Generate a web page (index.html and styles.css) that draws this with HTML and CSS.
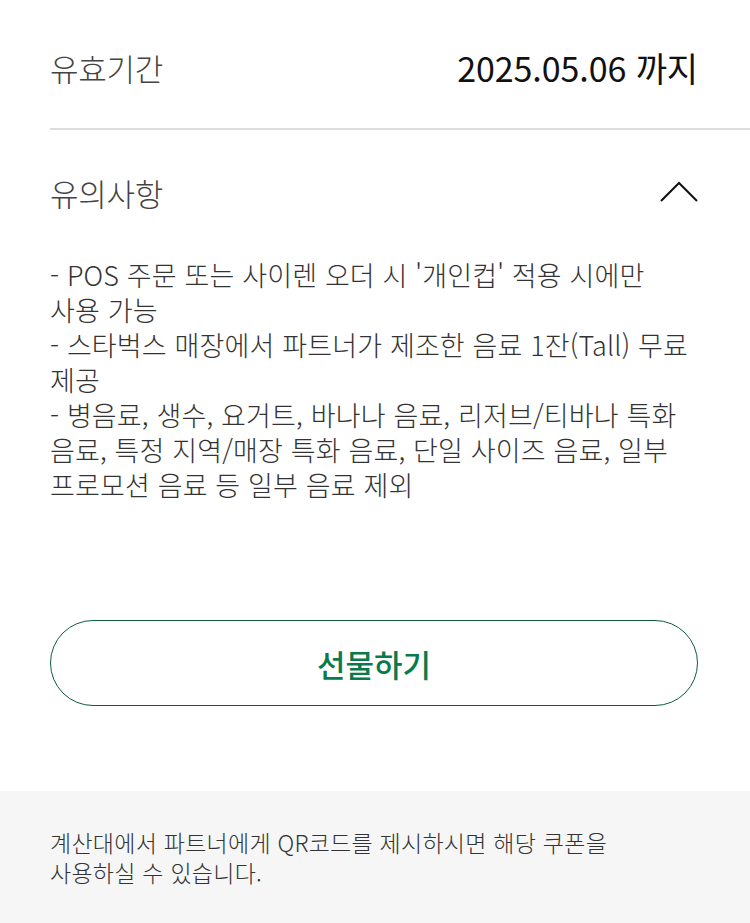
FILE: index.html
```html
<!DOCTYPE html>
<html lang="ko">
<head>
<meta charset="utf-8">
<link rel="stylesheet" href="styles.css">
</head>
<body>
<div class="page">
  <div class="row row-expiry">
    <span class="label">유효기간</span>
    <span class="value">2025.05.06 까지</span>
  </div>
  <div class="row row-notice">
    <span class="label">유의사항</span>
    <svg class="chevron" width="38" height="22" viewBox="0 0 38 22"><polyline points="1,20 19,2 37,20" fill="none" stroke="#111" stroke-width="2"/></svg>
  </div>
  <div class="notice-body">
    - POS 주문 또는 사이렌 오더 시 '개인컵' 적용 시에만<br>
    사용 가능<br>
    - 스타벅스 매장에서 파트너가 제조한 음료 1잔(Tall) 무료<br>
    제공<br>
    - 병음료, 생수, 요거트, 바나나 음료, 리저브/티바나 특화<br>
    음료, 특정 지역/매장 특화 음료, 단일 사이즈 음료, 일부<br>
    프로모션 음료 등 일부 음료 제외
  </div>
  <div class="actions">
    <button class="gift-btn">선물하기</button>
  </div>
</div>
<footer class="footer">
  계산대에서 파트너에게 QR코드를 제시하시면 해당 쿠폰을<br>
  사용하실 수 있습니다.
</footer>
</body>
</html>
```
FILE: styles.css
```css
html, body {
  margin: 0;
  padding: 0;
  background: #fff;
}
body {
  font-family: "Noto Sans CJK KR", "Noto Sans", sans-serif;
  width: 750px;
  height: 923px;
  overflow: hidden;
  display: flex;
  flex-direction: column;
}
.page {
  padding-left: 50px;
  flex: 1;
}
.row {
  display: flex;
  align-items: center;
  justify-content: space-between;
  padding-right: 52px;
  box-sizing: border-box;
}
.row-expiry {
  height: 124px;
  margin-top: 6px;
  border-bottom: 2px solid #dcdcdc;
}
.row-notice {
  height: 124px;
}
.label {
  font-size: 31px;
  color: #444;
  letter-spacing: -0.3px;
  font-weight: 300;
}
.value {
  font-size: 34px;
  color: #111;
  letter-spacing: -0.1px;
  font-weight: 400;
}
.chevron {
  display: block;
}
.notice-body {
  padding-top: 3px;
  padding-right: 30px;
  font-size: 27px;
  line-height: 35px;
  color: #333;
  letter-spacing: 0.15px;
  font-weight: 300;
  white-space: nowrap;
}
.actions {
  padding-right: 52px;
  margin-top: 118px;
}
.gift-btn {
  display: block;
  width: 100%;
  height: 86px;
  border: 1.5px solid #0d5c3c;
  border-radius: 43px;
  background: #fff;
  color: #0b7a4a;
  font-family: inherit;
  font-size: 31px;
  font-weight: 500;
  letter-spacing: 0;
}
.footer {
  height: 132px;
  box-sizing: border-box;
  background: #f6f6f6;
  padding: 36px 50px 0;
  font-size: 23px;
  line-height: 30px;
  color: #333;
  letter-spacing: 0.25px;
  font-weight: 300;
}
```
